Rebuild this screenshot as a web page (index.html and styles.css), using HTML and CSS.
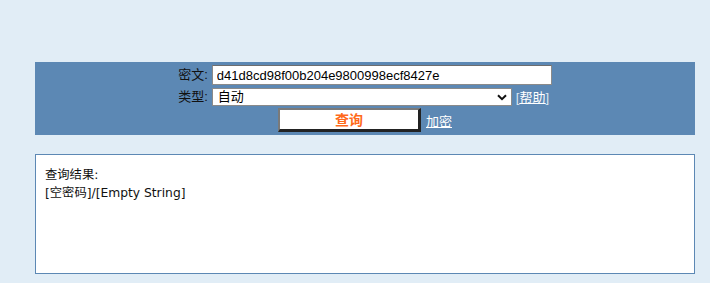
FILE: index.html
```html
<!DOCTYPE html>
<html lang="zh-CN">
<head>
<meta charset="utf-8">
<title>查询</title>
<link rel="stylesheet" href="styles.css">
</head>
<body>
<div class="band">
  <div class="form-grid">
    <label class="lbl" for="cipher">密文:</label>
    <div class="field"><input id="cipher" class="txt" type="text" value="d41d8cd98f00b204e9800998ecf8427e"></div>
    <label class="lbl" for="kind">类型:</label>
    <div class="field">
      <div class="sel-wrap">
        <select id="kind" class="sel"><option>自动</option></select>
        <svg class="chev" width="10" height="7" viewBox="0 0 10 7"><path d="M1 1.2 L5 5.2 L9 1.2" fill="none" stroke="#111" stroke-width="2"/></svg>
      </div>
      <a class="link help" href="#"><span class="br">[</span>帮助<span class="br">]</span></a>
    </div>
  </div>
  <div class="actions">
    <button class="btn" type="button">查询</button>
    <a class="link" href="#">加密</a>
  </div>
</div>
<div class="result">
  <div class="res-line">查询结果:</div>
  <div class="res-line">[空密码]/[Empty String]</div>
</div>
</body>
</html>
```
FILE: styles.css
```css
html, body {
  margin: 0;
  padding: 0;
  background: #e1edf6;
}
body {
  font-family: "Liberation Sans", Arial, "Noto Sans CJK SC", sans-serif;
  font-size: 13px;
  color: #000;
}
.band {
  margin: 62px 0 0 35px;
  width: 660px;
  height: 73px;
  background: #5c88b4;
  box-sizing: border-box;
  padding-top: 3px;
}
.form-grid {
  display: grid;
  grid-template-columns: auto auto;
  justify-content: center;
  column-gap: 4px;
  row-gap: 2px;
  align-items: center;
}
.lbl {
  text-align: right;
  color: #111;
  line-height: 16px;
}
.field {
  display: flex;
  align-items: center;
  gap: 4px;
}
.txt {
  width: 340px;
  height: 20px;
  box-sizing: border-box;
  margin: 0;
  padding: 0 4px;
  border: 1px solid #8a8a8a;
  border-top-color: #6e6e6e;
  background: #fff;
  font-family: "Liberation Sans", Arial, sans-serif;
  font-size: 13px;
  color: #000;
  outline: none;
}
.sel-wrap {
  position: relative;
  width: 300px;
  height: 18px;
}
.sel {
  appearance: none;
  -webkit-appearance: none;
  width: 300px;
  height: 18px;
  box-sizing: border-box;
  margin: 0;
  padding: 0 5px;
  border: 1px solid #8a8a8a;
  border-radius: 0;
  background: #fff;
  font-family: "Liberation Sans", Arial, "Noto Sans CJK SC", sans-serif;
  font-size: 13px;
  line-height: 16px;
  color: #000;
}
.chev {
  position: absolute;
  right: 5px;
  top: 6px;
  pointer-events: none;
}
.link {
  color: #fff;
  text-decoration: underline;
  font-size: 13px;
}
.help .br {
  color: #dbe6f1;
}
.actions {
  display: flex;
  justify-content: center;
  align-items: center;
  gap: 5px;
  margin-top: 2px;
}
.btn {
  width: 143px;
  height: 24px;
  box-sizing: border-box;
  margin: 0;
  padding: 0;
  background: #fff;
  border-style: solid;
  border-width: 2px 3px 3px 2px;
  border-color: #7a7a7a #222 #222 #7a7a7a;
  color: #ff6a1a;
  font-family: "Liberation Sans", Arial, "Noto Sans CJK SC", sans-serif;
  font-size: 14px;
  font-weight: bold;
  line-height: 18px;
}
.result {
  margin: 19px 0 0 35px;
  width: 660px;
  height: 120px;
  box-sizing: border-box;
  border: 1px solid #5c88b4;
  background: #fff;
  padding: 11px 9px;
  font-family: "DejaVu Sans", Verdana, "Noto Sans CJK SC", sans-serif;
  font-size: 12.3px;
  line-height: 18px;
  color: #111;
}
```
